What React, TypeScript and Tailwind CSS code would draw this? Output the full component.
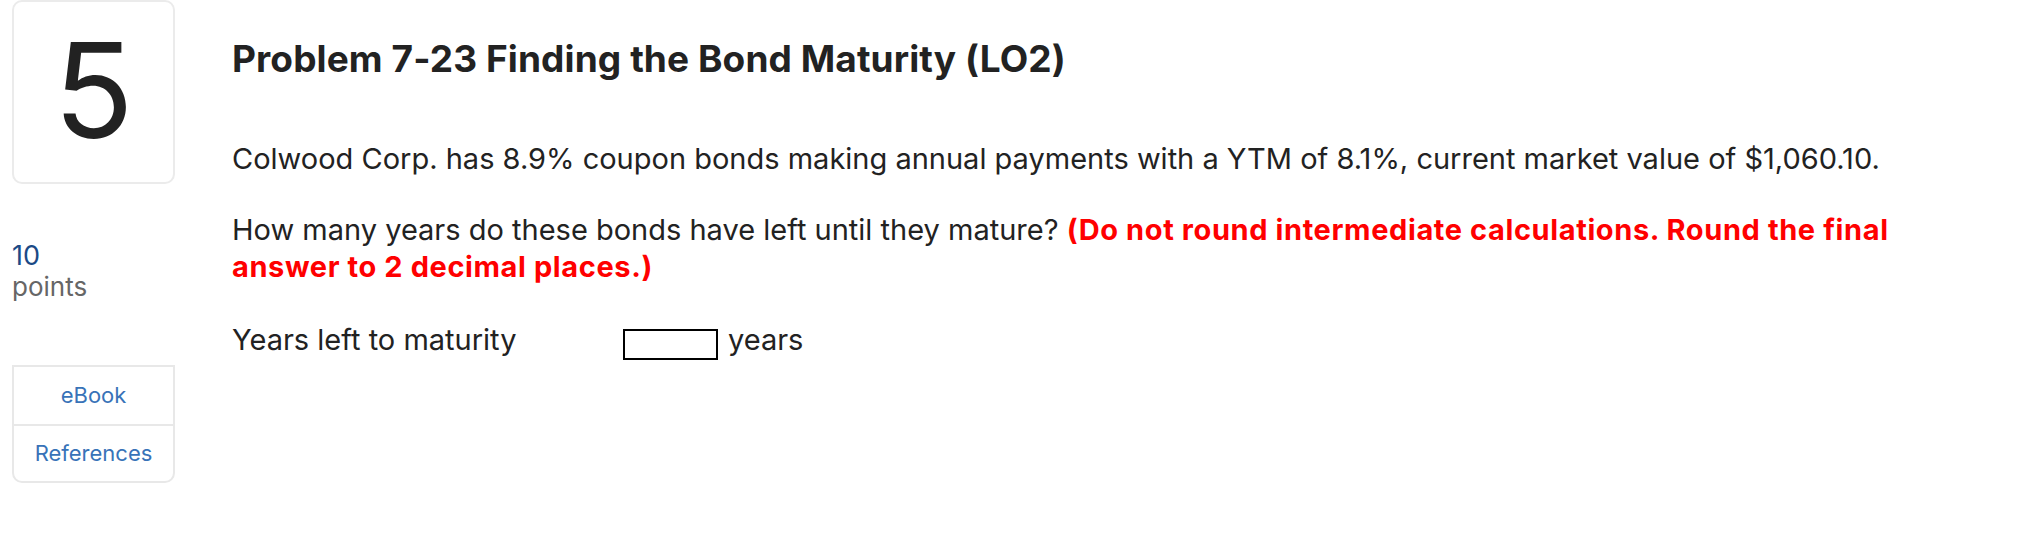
import React from 'react';

const FONT = "font-['Inter','Liberation_Sans',sans-serif]";

function SideColumn() {
  return (
    <aside className="flex w-[175px] shrink-0 flex-col pl-[12px]">
      <div className="flex h-[184px] w-[163px] items-center justify-center rounded-[10px] border-2 border-[#ebebeb] bg-white">
        <span className="pb-[4px] text-[132px] font-normal leading-none text-[#222]">5</span>
      </div>
      <div className="mt-[56px] text-[27px] leading-[32px] text-[#1b4a86]">10</div>
      <div className="text-[26px] leading-[30px] text-[#666]">points</div>
      <nav className="mt-[63px] flex w-[163px] flex-col rounded-b-[10px] border-2 border-[#e8e8e8] text-[22px] text-[#3873b8]">
        <a className="flex h-[59px] items-center justify-center border-b-2 border-[#e8e8e8]">eBook</a>
        <a className="flex h-[55px] items-center justify-center">References</a>
      </nav>
    </aside>
  );
}

export default function App() {
  return (
    <div className={`${FONT} flex h-[542px] w-full bg-white text-[#222]`}>
      <SideColumn />
      <main className="flex flex-col pl-[57px]">
        <h1 className="mt-[37px] text-[37px] font-bold leading-[44px] tracking-[0.1px]">
          Problem 7-23 Finding the Bond Maturity (LO2)
        </h1>
        <p className="mt-[59px] text-[29px] leading-[37px]">
          Colwood Corp. has 8.9% coupon bonds making annual payments with a YTM of 8.1%, current market value of
          $1,060.10.
        </p>
        <p className="mt-[34px] max-w-[1680px] text-[29px] leading-[37px]">
          How many years do these bonds have left until they mature?{' '}
          <strong className="font-bold tracking-[0.6px] text-[#ff0000]">
            (Do not round intermediate calculations. Round the final answer to 2 decimal places.)
          </strong>
        </p>
        <div className="mt-[36px] flex items-start text-[29px] leading-[37px]">
          <span className="w-[391px]">Years left to maturity</span>
          <input
            type="text"
            aria-label="Years left to maturity"
            className="mt-[8px] h-[31px] w-[95px] border-2 border-black bg-white outline-none"
          />
          <span className="ml-[10px]">years</span>
        </div>
      </main>
    </div>
  );
}
